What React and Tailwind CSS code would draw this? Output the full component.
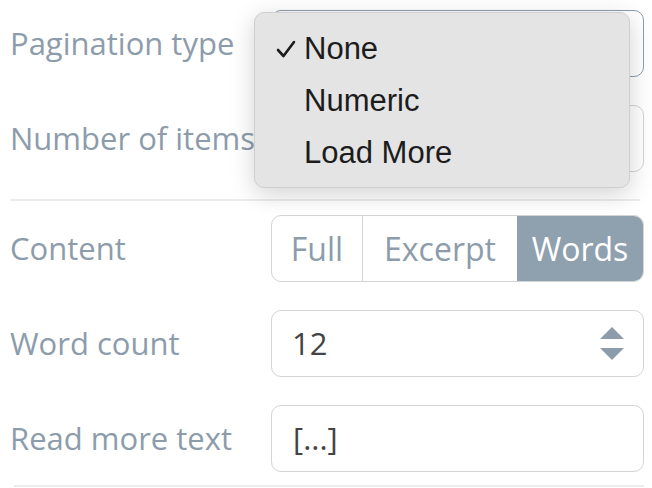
import React from "react";

const Label = ({ children }) => (
  <div className="w-[261px] shrink-0 text-[31px] leading-none text-[#8d9cab] whitespace-nowrap">{children}</div>
);

const Row = ({ label, children }) => (
  <div className="flex items-center h-[67px]">
    <Label>{label}</Label>
    <div className="flex-1">{children}</div>
  </div>
);

const App = () => {
  return (
    <div
      className="relative w-[652px] h-[488px] overflow-hidden bg-white"
      style={{ fontFamily: '"Open Sans", sans-serif' }}
    >
      <div className="flex flex-col pl-[10px] pr-[8px] pt-[10px]">
        <Row label="Pagination type">
          <div className="h-[67px] rounded-[10px] border-[1.5px] border-[#8d9cab] bg-white" />
        </Row>
        <div className="mt-[28px]">
          <Row label="Number of items">
            <div className="h-[67px] rounded-[10px] border border-[#d4d4d4] bg-white" />
          </Row>
        </div>
        <div className="mt-[27px] mr-[4px] h-[2px] bg-[#ececec]" />
        <div className="mt-[14px]">
          <Row label="Content">
            <div className="flex h-[67px] rounded-[10px] border border-[#d4d4d4] overflow-hidden text-[32px]">
              <div className="w-[91px] flex items-center justify-center text-[#8d9cab] border-r border-[#d4d4d4]">Full</div>
              <div className="w-[154px] flex items-center justify-center text-[#8d9cab]">Excerpt</div>
              <div className="flex-1 flex items-center justify-center bg-[#8fa0af] text-white">Words</div>
            </div>
          </Row>
        </div>
        <div className="mt-[28px]">
          <Row label="Word count">
            <div className="h-[67px] rounded-[10px] border border-[#d4d4d4] flex items-center justify-between pl-[20px] pr-[19px] text-[31px] text-[#444]">
              <span>12</span>
              <svg width="24" height="34" viewBox="0 0 24 34" className="text-[#8d9cab]">
                <polygon points="12,0 24,12 0,12" fill="currentColor" />
                <polygon points="0,21 24,21 12,33" fill="currentColor" />
              </svg>
            </div>
          </Row>
        </div>
        <div className="mt-[28px]">
          <Row label="Read more text">
            <div className="h-[67px] rounded-[10px] border border-[#d4d4d4] flex items-center pl-[21px] text-[31px] text-[#444]">
              [...]
            </div>
          </Row>
        </div>
        <div className="mt-[13px] ml-[4px] h-[2px] bg-[#ececec]" />
      </div>

      {/* open select menu */}
      <div
        className="absolute left-[254px] top-[12px] w-[376px] h-[176px] rounded-[10px] bg-[#e4e4e4] border border-[#cfcfcf] shadow-[0_6px_24px_rgba(0,0,0,0.18)] pt-[10px] text-[31px] text-[#1c1c1c]"
        style={{ fontFamily: '"Liberation Sans", Arial, sans-serif' }}
      >
        <div className="flex items-center h-[52px]">
          <span className="w-[49px] flex justify-end pr-[8px]">
            <svg width="20" height="20" viewBox="0 0 20 20">
              <path d="M2 11 L7.5 17 L18 3" fill="none" stroke="#1c1c1c" strokeWidth="2.6" strokeLinecap="round" strokeLinejoin="round" />
            </svg>
          </span>
          <span>None</span>
        </div>
        <div className="flex items-center h-[52px] pl-[49px]">Numeric</div>
        <div className="flex items-center h-[52px] pl-[49px]">Load More</div>
      </div>
    </div>
  );
};

export default App;
